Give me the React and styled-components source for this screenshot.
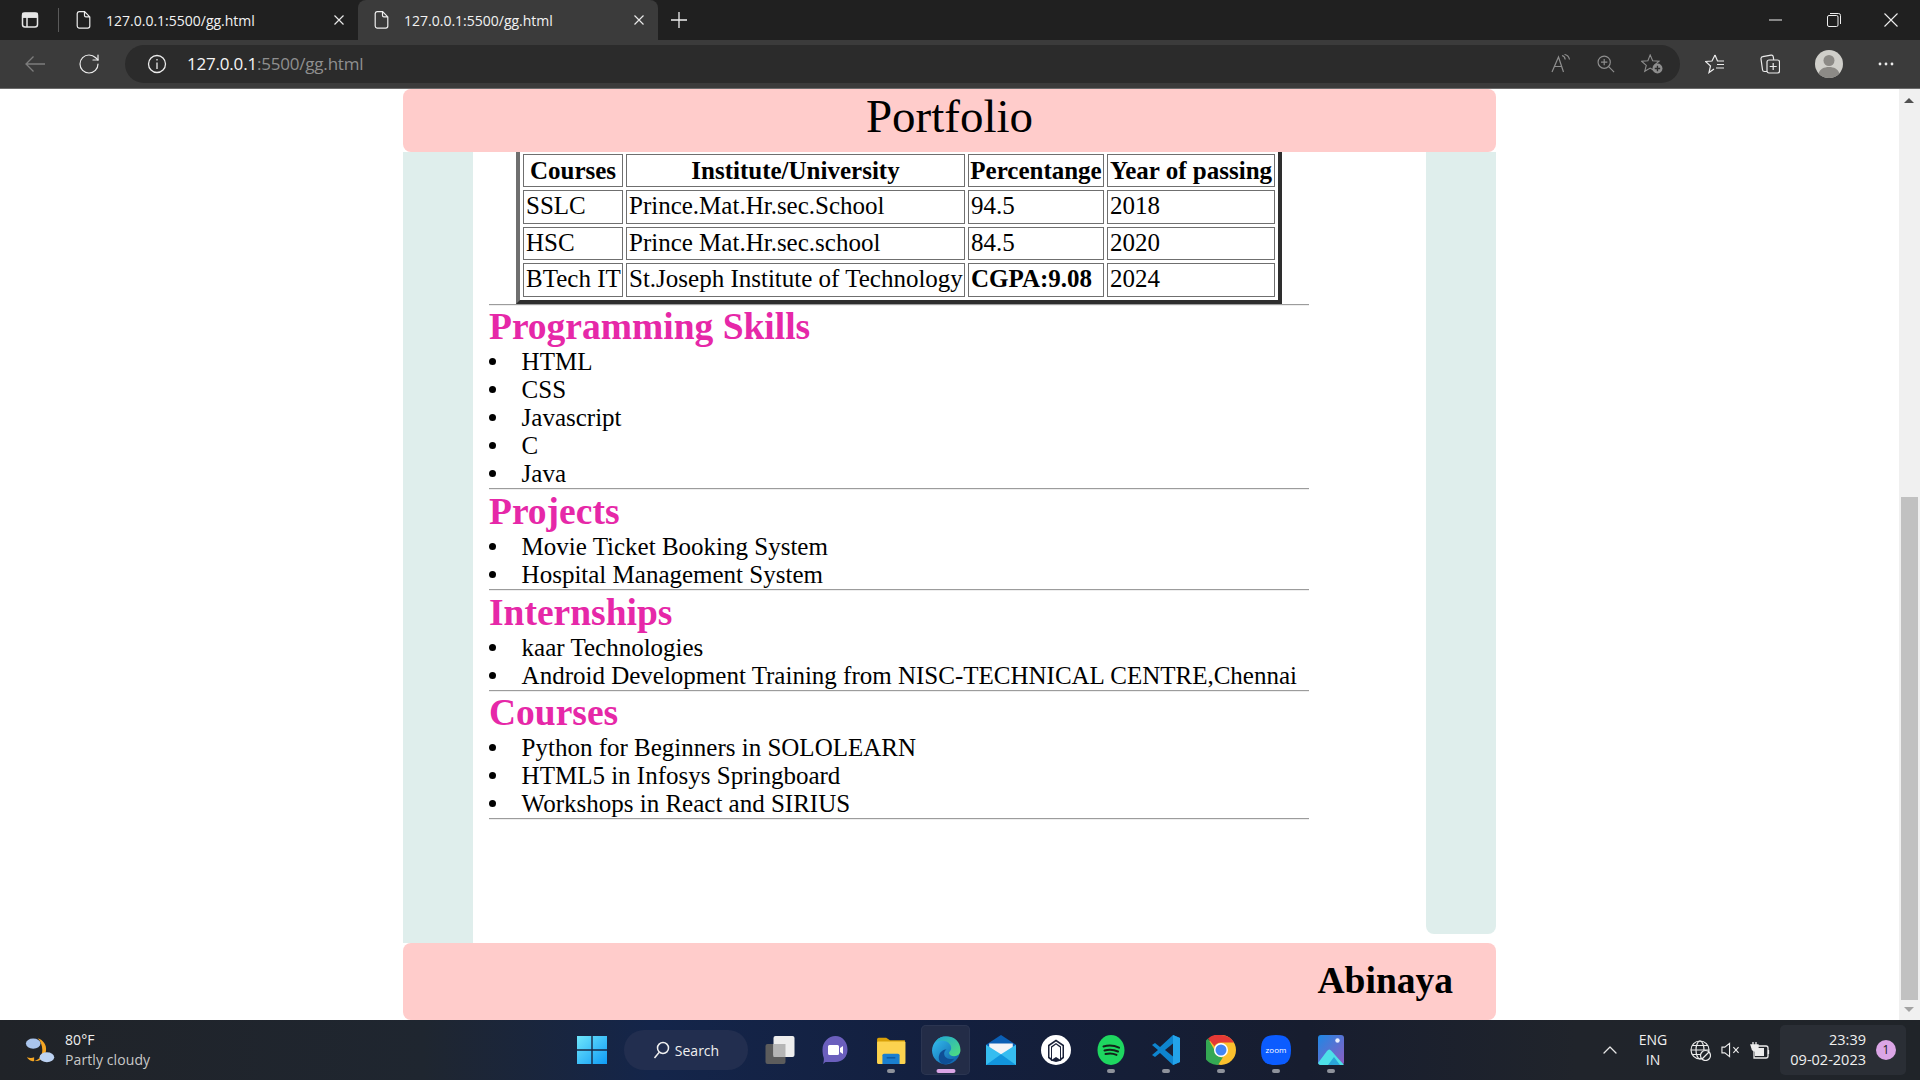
import React from 'react';
import styled, { createGlobalStyle } from 'styled-components';
import { FiChevronUp } from 'react-icons/fi';
import { RotateCw } from 'lucide-react';

const GlobalStyle = createGlobalStyle`
  html, body { margin: 0; padding: 0; height: 1080px; overflow: hidden; background: #fff; }
  body { font-family: "Liberation Serif", "Times New Roman", serif; }
`;

const Screen = styled.div`
  width: 1920px;
  height: 1080px;
  display: flex;
  flex-direction: column;
`;

/* browser chrome */
const TabStrip = styled.div`
  height: 40px;
  background: #202020;
  display: flex;
  align-items: flex-end;
  font-family: "Open Sans", "Noto Sans", sans-serif;
`;
const SideBtn = styled.div`
  width: 59px;
  height: 40px;
  display: flex;
  align-items: center;
  padding-left: 21px;
  box-sizing: border-box;
  position: relative;
  &::after {
    content: '';
    position: absolute;
    right: 0;
    top: 8px;
    height: 24px;
    width: 1px;
    background: #5a5a5a;
  }
`;
const Tab = styled.div`
  width: ${p => (p.$active ? '300px' : '299px')};
  height: 40px;
  box-sizing: border-box;
  display: flex;
  align-items: center;
  padding-left: ${p => (p.$active ? '16px' : '17px')};
  color: #f2f2f2;
  font-size: 14px;
  background: ${p => (p.$active ? '#3b3b3b' : 'transparent')};
  border-radius: ${p => (p.$active ? '8px 8px 0 0' : '0')};
`;
const TabTitle = styled.span`
  margin-left: 15px;
  flex: 1;
`;
const TabClose = styled.svg`
  width: 12px;
  height: 12px;
  margin-right: 13px;
`;
const NewTab = styled.div`
  width: 42px;
  height: 40px;
  display: flex;
  align-items: center;
  justify-content: center;
`;
const WindowBtns = styled.div`
  margin-left: auto;
  display: flex;
  height: 40px;
  align-items: center;
`;
const WinBtn = styled.div`
  width: 57.5px;
  display: flex;
  justify-content: center;
`;
const NavBar = styled.div`
  height: 49px;
  padding-bottom: 1px;
  background: #3b3b3b;
  border-bottom: 1px solid #6b6b6b;
  box-sizing: border-box;
  display: flex;
  align-items: center;
  font-family: "Open Sans", "Noto Sans", sans-serif;
`;
const NavIcon = styled.div`
  width: ${p => p.$w}px;
  display: flex;
  justify-content: center;
`;
const AddressBar = styled.div`
  width: 1555px;
  margin-left: 17px;
  height: 38px;
  border-radius: 19px;
  background: #2b2b2b;
  display: flex;
  align-items: center;
  padding-left: 22px;
  box-sizing: border-box;
  font-size: 17px;
  color: #f5f5f5;
`;
const Url = styled.span`
  margin-left: 20px;
  letter-spacing: -0.2px;
  span { color: #8f8f8f; }
`;
const AddressIcons = styled.div`
  margin-left: auto;
  display: flex;
  align-items: center;
  padding-right: 17px;
  gap: 26px;
`;
const Tools = styled.div`
  display: flex;
  align-items: center;
  margin-left: 25px;
  gap: 35px;
`;

/* page */
const Viewport = styled.div`
  height: 931px;
  display: flex;
  background: #fff;
  overflow: hidden;
`;
const PageArea = styled.div`
  flex: 1;
  padding-left: 403px;
  color: #000;
`;
const Page = styled.div`
  width: 1093px;
  height: 931px;
  display: flex;
  flex-direction: column;
`;
const Header = styled.header`
  height: 63px;
  flex: none;
  background: #ffcccb;
  border-radius: 8px;
  text-align: center;
  font-size: 47px;
  line-height: 54px;
  position: relative;
  z-index: 1;
`;
const Middle = styled.div`
  height: 791px;
  flex: none;
  display: flex;
  align-items: flex-start;
`;
const LeftRail = styled.div`
  width: 70px;
  height: 100%;
  background: #dfeeec;
`;
const Main = styled.main`
  width: 953px;
  padding-left: 16px;
  box-sizing: border-box;
  height: 100%;
`;
const RightRail = styled.div`
  width: 70px;
  height: 782px;
  background: #dfeeec;
  border-radius: 0 0 8px 8px;
`;
const Footer = styled.footer`
  height: 77px;
  flex: none;
  background: #ffcccb;
  border-radius: 8px;
  text-align: right;
  padding-right: 43px;
  font-size: 37.5px;
  font-weight: bold;
  line-height: 75px;
`;
const EduTable = styled.table`
  table-layout: fixed;
  width: 766px;
  margin: -1.4px 0 0 27px;
  border: 4px solid #2e2e2e;
  border-left-color: #6f6f6f;
  border-top: 0;
  border-spacing: 3px;
  font-size: 25px;
  line-height: 29.5px;
`;
const HeadCell = styled.th`
  width: ${p => p.$w}px;
  box-sizing: border-box;
  border: 1px solid #6f6f6f;
  padding: 1px;
  white-space: nowrap;
`;
const Cell = styled.td`
  border: 1px solid #6f6f6f;
  padding: 0 2px 2px 2px;
  white-space: nowrap;
`;
const Rule = styled.hr`
  width: 820px;
  margin: 0;
  border: 0;
  border-top: 1px solid #9c9c9c;
  border-bottom: 1px solid #eeeeee;
  height: 0;
`;
const Heading = styled.h2`
  margin: 0;
  padding-top: 0.5px;
  font-size: 37.5px;
  line-height: 42.2px;
  font-weight: bold;
  color: #e628a8;
`;
const List = styled.ul`
  margin: 0;
  padding-left: 32.6px;
  list-style: none;
  font-size: 25px;
  line-height: 28px;
`;
const Item = styled.li`
  position: relative;
  &::before {
    content: '';
    position: absolute;
    left: -33px;
    top: 10px;
    width: 7px;
    height: 7px;
    border-radius: 50%;
    background: #000;
  }
`;

/* scrollbar */
const Scrollbar = styled.div`
  width: 21px;
  background: #f0f0f0;
  position: relative;
`;
const Arrow = styled.div`
  position: absolute;
  left: 5px;
  ${p => (p.$down ? 'bottom: 8px;' : 'top: 9px;')}
  width: 0;
  height: 0;
  border-left: 5px solid transparent;
  border-right: 5px solid transparent;
  ${p => (p.$down ? 'border-top: 5px solid #a3a3a3;' : 'border-bottom: 5px solid #505050;')}
`;
const Thumb = styled.div`
  position: absolute;
  left: 2px;
  right: 2px;
  top: 408px;
  bottom: 20px;
  background: #c1c1c1;
`;

/* taskbar */
const Taskbar = styled.div`
  height: 60px;
  background: linear-gradient(90deg, #202328 0%, #1f2630 22%, #14254a 34%, #131f3e 50%, #171d2f 68%, #20242b 82%, #202429 100%);
  display: flex;
  align-items: center;
  position: relative;
  font-family: "Open Sans", "Noto Sans", sans-serif;
  color: #f0f0f0;
`;
const Weather = styled.div`
  display: flex;
  align-items: center;
  padding-left: 25px;
  gap: 9px;
  width: 577px;
  box-sizing: border-box;
`;
const WeatherText = styled.div`
  font-size: 14px;
  line-height: 20px;
  letter-spacing: 0.1px;
  span { display: block; color: #c8c8c8; }
`;
const Apps = styled.div`
  display: flex;
  align-items: center;
  height: 60px;
`;
const SearchPill = styled.div`
  width: 124px;
  height: 40px;
  border-radius: 20px;
  background: #222e4f;
  display: flex;
  align-items: center;
  justify-content: center;
  gap: 5px;
  font-size: 14px;
  margin: 0 5px 0 17px;
`;
const AppSlot = styled.div`
  width: 55px;
  height: 50px;
  display: flex;
  align-items: center;
  justify-content: center;
  position: relative;
  border-radius: 5px;
  ${p => p.$active && 'background: #232c47; box-shadow: inset 0 0 0 1px #2b3551; width: 49px; margin: 0 3px;'}
`;
const AppDot = styled.i`
  position: absolute;
  bottom: 2px;
  left: 50%;
  transform: translateX(-50%);
  width: ${p => (p.$active ? '19px' : '8px')};
  height: 4px;
  border-radius: 2px;
  background: ${p => (p.$active ? '#dba5e6' : '#8e929b')};
`;
const Tray = styled.div`
  position: absolute;
  right: 14px;
  top: 5px;
  height: 50px;
  display: flex;
  align-items: center;
`;
const Lang = styled.div`
  width: 50px;
  margin: 0 12px 0 6px;
  font-size: 14px;
  line-height: 20px;
  text-align: center;
`;
const TrayIcons = styled.div`
  display: flex;
  align-items: center;
  gap: 10px;
`;
const Clock = styled.div`
  width: 126px;
  height: 50px;
  margin-left: 10px;
  padding: 0 10px 0 0;
  box-sizing: border-box;
  border-radius: 5px;
  background: #2a2e35;
  display: flex;
  align-items: center;
  justify-content: flex-end;
  gap: 10px;
  font-size: 14.5px;
  line-height: 20px;
  text-align: right;
`;
const Badge = styled.div`
  width: 20px;
  height: 20px;
  border-radius: 50%;
  background: #dba5e6;
  color: #1b1b1b;
  font-size: 12px;
  line-height: 20px;
  text-align: center;
  flex: none;
`;

const FileIcon = () => (
  <svg width="15" height="18" viewBox="0 0 14 18" fill="none" stroke="#eee" strokeWidth="1.2">
    <path d="M2.5.7h5.6l5.2 5.2v9.2a2 2 0 0 1-2 2H2.5a2 2 0 0 1-1.8-2V2.6A2 2 0 0 1 2.5.7zM8 .9v3.6a1.4 1.4 0 0 0 1.4 1.4h3.8" />
  </svg>
);
const CloseIcon = () => (
  <TabClose viewBox="0 0 12 12" stroke="#e8e8e8" strokeWidth="1.2"><path d="M1.5 1.5l9 9M10.5 1.5l-9 9" /></TabClose>
);

const EdgeIcon = () => (
  <svg width="30" height="31" viewBox="0 0 28 30">
    <defs>
      <linearGradient id="edgeA" x1="0" y1="0" x2="1" y2="1"><stop offset="0" stopColor="#35c1f1" /><stop offset="1" stopColor="#0c59a4" /></linearGradient>
      <linearGradient id="edgeB" x1="0" y1="0" x2="1" y2="1"><stop offset="0" stopColor="#1fa5d8" /><stop offset="1" stopColor="#50e07a" /></linearGradient>
    </defs>
    <circle cx="14" cy="15" r="13.5" fill="url(#edgeA)" />
    <path d="M3 8C6 2 11 1 15 1.500c8 0 13 6 13 13 0 4-3 6-6 6-3 0-5-1-5-3 0-2 2-2 2-5 0-4-4-7-8-7-4 0-8 1-8 2.500z" fill="url(#edgeB)" />
    <path d="M22 23c-3 4-7 6-11 5-3-1-5-5-3.500-9 1-3 4-5 7-5-3 2-3 6 0 8 2 1.500 5 1.500 7.500 1z" fill="#0f4f96" />
  </svg>
);

const apps = [
  { key: 'teams', icon: (
    <svg width="29" height="30" viewBox="0 0 26 30">
      <path d="M13 1c7 0 12 6 12 13.500S20 27 13 27H3l-2.500 2c.8-2 1-4 .8-6C.4 20.500 0 17.500 0 14.500 0 7 6 1 13 1z" fill="#6b5fbd" />
      <path d="M7 10h8a1.500 1.500 0 0 1 1.500 1.500v7A1.500 1.500 0 0 1 15 20H7a1.500 1.500 0 0 1-1.500-1.500v-7A1.500 1.500 0 0 1 7 10zM17.500 13l3-2v8l-3-2z" fill="#fff" />
    </svg>
  ) },
  { key: 'files', dot: true, icon: (
    <svg width="30" height="30" viewBox="0 0 28 28">
      <path d="M1 4a1.500 1.500 0 0 1 1.500-1.500h7L13 5h14v20a1.500 1.500 0 0 1-1.500 1.500h-23A1.500 1.500 0 0 1 1 25z" fill="#d9a008" />
      <rect x="1" y="6" width="26.500" height="21" rx="1" fill="#fcd34f" />
      <path d="M6 25v-6a1.500 1.500 0 0 1 1.500-1.500h13A1.500 1.500 0 0 1 22 19v8H6z" fill="#1a7fd0" />
      <rect x="10" y="20.500" width="8" height="1.500" fill="#0d5ca5" />
    </svg>
  ) },
  { key: 'edge', active: true, icon: <EdgeIcon /> },
  { key: 'mail', icon: (
    <svg width="30" height="30" viewBox="0 0 28 28">
      <path d="M14 0L0 9v19h28V9z" fill="#0a5fb5" />
      <path d="M3 8h22v9l-11 6-11-6z" fill="#f2f4f7" />
      <path d="M0 9l14 9 14-9v19H0z" fill="#36bdf0" />
      <path d="M0 28l14-10 14 10z" fill="#1295dd" />
    </svg>
  ) },
  { key: 'github', icon: (
    <svg width="30" height="30" viewBox="0 0 30 30">
      <circle cx="15" cy="15" r="15" fill="#fff" />
      <path d="M15 4.500l8 5.500v13l-4 3V12.500l-4-3-4 3V26l-4-3V10z" fill="#1a2138" />
      <path d="M9.500 25.500l5.500-3.500 5.500 3.500-5.500 1.500z" fill="#1a2138" />
      <path d="M15 6.500l6.500 4.500v11l-1.500 1V11.500L15 8l-5 3.500V23l-1.500-1V11z" fill="#fff" />
    </svg>
  ) },
  { key: 'spotify', dot: true, icon: (
    <svg width="28" height="30" viewBox="0 0 27 30">
      <ellipse cx="13.500" cy="15" rx="13.500" ry="15" fill="#1ed760" />
      <path d="M6 11.500c5-1.500 11-1 15.500 1.200M7 15.500c4.500-1.200 9.500-.8 13.500 1M8 19c3.500-.9 8-.6 11 .9" stroke="#13231a" strokeWidth="2" strokeLinecap="round" fill="none" />
    </svg>
  ) },
  { key: 'vscode', dot: true, icon: (
    <svg width="30" height="32" viewBox="0 0 30 32">
      <path d="M22 1l7 3v24l-7 3-13-12-5 4-3-2 6-5-6-5 3-2 5 4z" fill="#0e85cf" />
      <path d="M22 1l7 3v24l-7 3z" fill="#23a3ea" />
      <path d="M22 9.500L14 16l8 6.500z" fill="#1a2138" />
    </svg>
  ) },
  { key: 'chrome', dot: true, icon: (
    <svg width="30" height="30" viewBox="0 0 30 30">
      <circle cx="15" cy="15" r="15" fill="#fbc02d" />
      <path d="M15 0a15 15 0 0 1 13 7.500H15a7.500 7.500 0 0 0-6.500 3.700L2 3.500A15 15 0 0 1 15 0z" fill="#e53935" />
      <path d="M2 3.500l6.500 11.500a7.500 7.500 0 0 0 8.500 7.300L12 30A15 15 0 0 1 2 3.500z" fill="#34a853" />
      <circle cx="15" cy="15" r="7" fill="#fff" />
      <circle cx="15" cy="15" r="5.500" fill="#4285f4" />
    </svg>
  ) },
  { key: 'zoom', dot: true, icon: (
    <svg width="30" height="30" viewBox="0 0 30 30">
      <path d="M15 0c11 0 15 4 15 15s-4 15-15 15S0 26 0 15 4 0 15 0z" fill="#0b5cff" />
      <text x="15" y="18" textAnchor="middle" fontSize="8" fill="#fff" fontFamily="Open Sans, sans-serif">zoom</text>
    </svg>
  ) },
  { key: 'photos', dot: true, icon: (
    <svg width="26" height="30" viewBox="0 0 26 30">
      <defs><linearGradient id="ph" x1="0" y1="0" x2="1" y2="1"><stop offset="0" stopColor="#1e88e5" /><stop offset="1" stopColor="#8e5cc0" /></linearGradient></defs>
      <rect width="26" height="30" rx="3" fill="url(#ph)" />
      <circle cx="19.500" cy="5.500" r="2.200" fill="#e8eefc" />
      <path d="M0 28l9-12c1.500-2 3-2 4.500 0L26 30H3a3 3 0 0 1-3-2z" fill="#4de0e8" />
      <path d="M10 30l6-8 6 8z" fill="#2aa5d8" />
    </svg>
  ) },
];

const skills = ['HTML', 'CSS', 'Javascript', 'C', 'Java'];
const projects = ['Movie Ticket Booking System', 'Hospital Management System'];
const internships = ['kaar Technologies', 'Android Development Training from NISC-TECHNICAL CENTRE,Chennai'];
const courses = ['Python for Beginners in SOLOLEARN', 'HTML5 in Infosys Springboard', 'Workshops in React and SIRIUS'];

const Section = ({ title, items }) => (
  <>
    <Heading>{title}</Heading>
    <List>{items.map(i => <Item key={i}>{i}</Item>)}</List>
    <Rule />
  </>
);

const App = () => (
  <Screen>
    <GlobalStyle />
    <TabStrip>
      <SideBtn>
        <svg width="18" height="18" viewBox="0 0 18 18" fill="none" stroke="#e6e6e6" strokeWidth="1.500">
          <rect x="1.500" y="2" width="15" height="14" rx="2.500" />
          <path d="M1.500 6h15M6 6v10" />
          <path d="M2 2.500h14V6H2z" fill="#e6e6e6" />
        </svg>
      </SideBtn>
      <Tab><FileIcon /><TabTitle>127.0.0.1:5500/gg.html</TabTitle><CloseIcon /></Tab>
      <Tab $active><FileIcon /><TabTitle>127.0.0.1:5500/gg.html</TabTitle><CloseIcon /></Tab>
      <NewTab>
        <svg width="18" height="18" viewBox="0 0 18 18" stroke="#eee" strokeWidth="1.300"><path d="M9 1v16M1 9h16" /></svg>
      </NewTab>
      <WindowBtns>
        <WinBtn><svg width="14" height="14" viewBox="0 0 14 14" stroke="#eee"><path d="M0 7h13" /></svg></WinBtn>
        <WinBtn>
          <svg width="14" height="14" viewBox="0 0 14 14" fill="none" stroke="#eee"><rect x=".5" y="2.500" width="10.500" height="11" rx="1.500" /><path d="M3 .5h8.500a2 2 0 0 1 2 2V11" /></svg>
        </WinBtn>
        <WinBtn><svg width="14" height="14" viewBox="0 0 14 14" stroke="#eee" strokeWidth="1.100"><path d="M.5.500l13 13M13.500.500l-13 13" /></svg></WinBtn>
      </WindowBtns>
    </TabStrip>
    <NavBar>
      <NavIcon $w={70}>
        <svg width="22" height="18" viewBox="0 0 22 18" fill="none" stroke="#7d7d7d" strokeWidth="1.300"><path d="M21 9H2M9.500 1.500L2 9l7.500 7.500" /></svg>
      </NavIcon>
      <NavIcon $w={38}>
        <RotateCw size={24} color="#ececec" strokeWidth={1.200} />
      </NavIcon>
      <AddressBar>
        <svg width="20" height="20" viewBox="0 0 20 20" fill="none" stroke="#ececec" strokeWidth="1.300">
          <circle cx="10" cy="10" r="8.500" /><path d="M10 8.500V15M10 5v1.500" />
        </svg>
        <Url>127.0.0.1<span>:5500/gg.html</span></Url>
        <AddressIcons>
          <svg width="20" height="20" viewBox="0 0 20 20" fill="none" stroke="#8e8e8e" strokeWidth="1.200"><path d="M1 18L7.500 3 12.500 18M3.500 12.500h7.500M11 1.500c2 .5 3 2 3.200 4M13.500.5c2.500.5 4.500 2.500 5 5" /></svg>
          <svg width="18" height="18" viewBox="0 0 20 20" fill="none" stroke="#8e8e8e" strokeWidth="1.300"><circle cx="8" cy="8" r="6.800" /><path d="M8 4.500v7M4.500 8h7M13 13l6 6" /></svg>
          <svg width="22" height="20" viewBox="0 0 24 22" fill="none" stroke="#8e8e8e" strokeWidth="1.200">
            <path d="M10 1l2.700 6.500 7 .5-5.300 4.500 1.700 6.800L10 15.500 4 19l1.700-6.500L.5 8l7-.5z" />
            <circle cx="18" cy="16" r="5.500" fill="#8e8e8e" stroke="none" />
            <path d="M18 13v6M15 16h6" stroke="#2b2b2b" strokeWidth="1.500" />
          </svg>
        </AddressIcons>
      </AddressBar>
      <Tools>
        <svg width="20" height="20" viewBox="0 0 20 20" fill="none" stroke="#ececec" strokeWidth="1.200">
          <path d="M10 1l2.500 6H19M12 10.500h7M11 14h8M9 15l-5 3.500 1.500-6.500L.5 7.500l6.500-.5L10 1" />
        </svg>
        <svg width="20" height="20" viewBox="0 0 20 20" fill="none" stroke="#ececec" strokeWidth="1.200">
          <path d="M7 17.500H4.500a2 2 0 0 1-2-1.800L1 5a2 2 0 0 1 1.700-2.300L11 1.200a2 2 0 0 1 2.300 1.600l.4 3" />
          <rect x="7" y="6" width="12.500" height="13" rx="2" />
          <path d="M13.200 9v7M9.700 12.500h7" />
        </svg>
        <svg width="28" height="28" viewBox="0 0 28 28">
          <circle cx="14" cy="14" r="14" fill="#d0cfca" />
          <circle cx="14" cy="10.500" r="5.500" fill="#8c8a86" />
          <path d="M3.500 23.500C5 19 9 17 14 17s9 2 10.500 6.500A14 14 0 0 1 14 28 14 14 0 0 1 3.500 23.500z" fill="#8c8a86" />
        </svg>
        <svg width="16" height="4" viewBox="0 0 16 4" fill="#ececec">
          <circle cx="2" cy="2" r="1.400" /><circle cx="8" cy="2" r="1.400" /><circle cx="14" cy="2" r="1.400" />
        </svg>
      </Tools>
    </NavBar>
    <Viewport>
      <PageArea>
        <Page>
          <Header>Portfolio</Header>
          <Middle>
            <LeftRail />
            <Main>
              <EduTable>
                <tbody>
                  <tr>
                    <HeadCell $w={100}>Courses</HeadCell>
                    <HeadCell $w={339}>Institute/University</HeadCell>
                    <HeadCell $w={136}>Percentange</HeadCell>
                    <HeadCell $w={168}>Year of passing</HeadCell>
                  </tr>
                  <tr><Cell>SSLC</Cell><Cell>Prince.Mat.Hr.sec.School</Cell><Cell>94.5</Cell><Cell>2018</Cell></tr>
                  <tr><Cell>HSC</Cell><Cell>Prince Mat.Hr.sec.school</Cell><Cell>84.5</Cell><Cell>2020</Cell></tr>
                  <tr><Cell>BTech IT</Cell><Cell>St.Joseph Institute of Technology</Cell><Cell><b>CGPA:9.08</b></Cell><Cell>2024</Cell></tr>
                </tbody>
              </EduTable>
              <Rule />
              <Section title="Programming Skills" items={skills} />
              <Section title="Projects" items={projects} />
              <Section title="Internships" items={internships} />
              <Section title="Courses" items={courses} />
            </Main>
            <RightRail />
          </Middle>
          <Footer>Abinaya</Footer>
        </Page>
      </PageArea>
      <Scrollbar><Arrow /><Thumb /><Arrow $down /></Scrollbar>
    </Viewport>
    <Taskbar>
      <Weather>
        <svg width="31" height="30" viewBox="0 0 34 32">
          <path d="M14 3c6 2 10 7 9 14-1 7-7 12-13 11 6-1 9-6 9-12 0-5-2-10-5-13z" fill="#f5a623" />
          <path d="M10 28c-3 1-6-1-8-4 3 1 6 1 8 0z" fill="#f5a623" />
          <ellipse cx="9" cy="9" rx="8" ry="5.500" fill="#a9c4ec" />
          <ellipse cx="24" cy="24" rx="8" ry="5.500" fill="#bcd2f2" />
        </svg>
        <WeatherText>80°F<span>Partly cloudy</span></WeatherText>
      </Weather>
      <Apps>
        <svg width="30" height="30" viewBox="0 0 30 30">
          <defs><linearGradient id="win" x1="0" y1="0" x2="1" y2="1"><stop offset="0" stopColor="#6fe6fb" /><stop offset="1" stopColor="#0f9bf5" /></linearGradient></defs>
          <path d="M0 1h14.300v13.300H0zM15.700 1H30v13.300H15.700zM0 15.700h14.300V29H0zM15.700 15.700H30V29H15.700z" fill="url(#win)" />
        </svg>
        <SearchPill>
          <svg width="17" height="18" viewBox="0 0 17 18" fill="none" stroke="#f0f0f0" strokeWidth="1.500"><circle cx="10" cy="7" r="5.500" /><path d="M6 11.500L1.500 17" /></svg>
          Search
        </SearchPill>
        <AppSlot>
          <svg width="31" height="28" viewBox="0 0 30 28">
            <rect x="0" y="8" width="20" height="20" rx="2" fill="#5c5c5c" />
            <rect x="8" y="0" width="21" height="21" rx="2" fill="#ededed" />
            <rect x="8" y="8" width="12" height="13" fill="#b5b5b5" />
          </svg>
        </AppSlot>
        {apps.map(a => (
          <AppSlot key={a.key} $active={a.active}>
            {a.icon}
            {a.dot && <AppDot />}
            {a.active && <AppDot $active />}
          </AppSlot>
        ))}
      </Apps>
      <Tray>
        <FiChevronUp size={24} color="#e6e6e6" strokeWidth={1.300} />
        <Lang>ENG<br />IN</Lang>
        <TrayIcons>
          <svg width="21" height="21" viewBox="0 0 21 21" fill="none" stroke="#ececec" strokeWidth="1.200">
            <circle cx="10" cy="10" r="9" /><ellipse cx="10" cy="10" rx="4" ry="9" /><path d="M1 10h18M2 5.500h16M2 14.500h16" />
            <circle cx="15.500" cy="15.500" r="5" fill="#202429" /><path d="M12 19l7-7" />
          </svg>
          <svg width="19" height="16" viewBox="0 0 20 16" fill="none" stroke="#ececec" strokeWidth="1.200">
            <path d="M1 5h3l5-4v14l-5-4H1zM13 5l5.500 6M18.500 5L13 11" />
          </svg>
          <svg width="20" height="18" viewBox="0 0 20 18">
            <path d="M4 5h12a2 2 0 0 1 2 2v8a2 2 0 0 1-2 2H4z" fill="none" stroke="#ececec" strokeWidth="1.300" />
            <rect x="5" y="7" width="9" height="8" fill="#ececec" />
            <path d="M3 1v3M6 1v3M1 4h7v3a3 3 0 0 1-3 3 3 3 0 0 1-3-3zM18.500 9v4" stroke="#ececec" fill="#ececec" strokeWidth="1.300" />
          </svg>
        </TrayIcons>
        <Clock>
          <div>23:39<br />09-02-2023</div>
          <Badge>1</Badge>
        </Clock>
      </Tray>
    </Taskbar>
  </Screen>
);

export default App;
